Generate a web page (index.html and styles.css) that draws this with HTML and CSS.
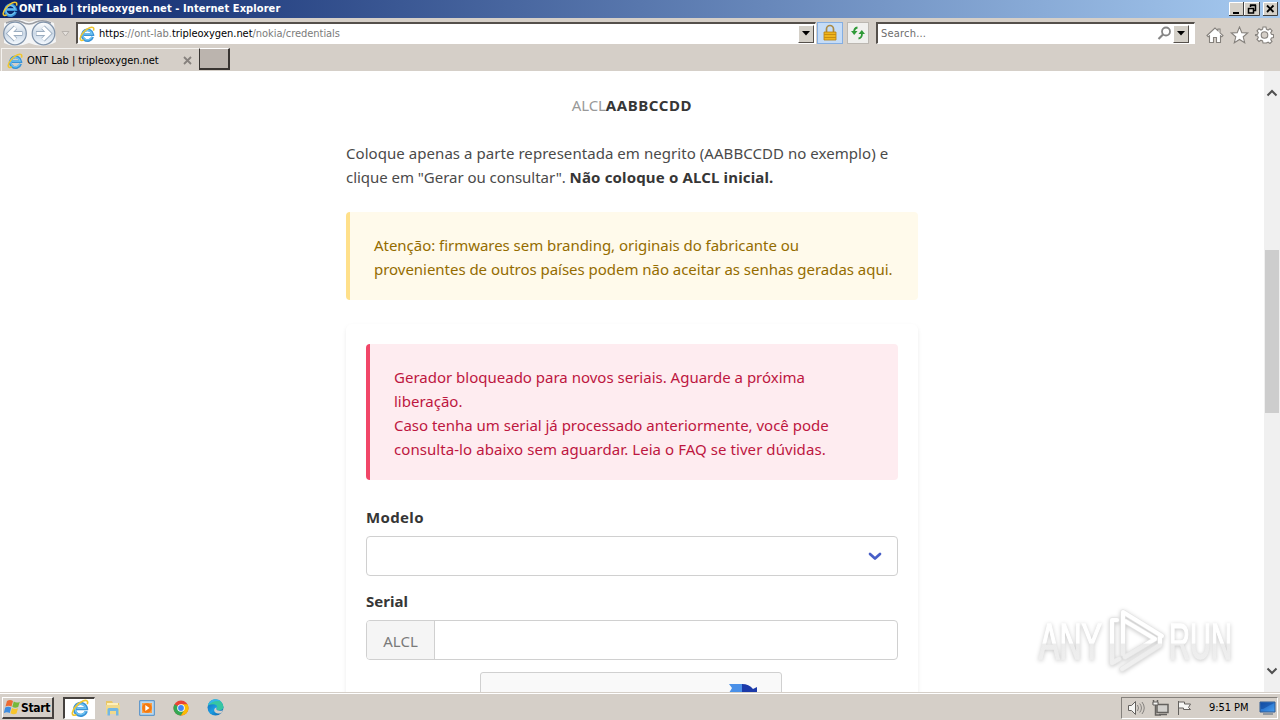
FILE: index.html
```html
<!DOCTYPE html>
<html lang="pt-BR">
<head>
<meta charset="utf-8">
<title>ONT Lab | tripleoxygen.net</title>
<link rel="stylesheet" href="styles.css">
</head>
<body>
<svg class="defs" width="0" height="0">
  <defs>
    <linearGradient id="ring" x1="0" y1="0" x2="0" y2="1"><stop offset="0" stop-color="#fff"/><stop offset=".5" stop-color="#cbd8e6"/><stop offset="1" stop-color="#f5faff"/></linearGradient>
    <linearGradient id="screen" x1="0" y1="0" x2="1" y2="1"><stop offset="0" stop-color="#1458b8"/><stop offset="1" stop-color="#4aa0f0"/></linearGradient>
    <linearGradient id="edge" x1="0" y1="0" x2="1" y2="1"><stop offset="0" stop-color="#1663b5"/><stop offset=".5" stop-color="#1b9de2"/><stop offset="1" stop-color="#0c59a4"/></linearGradient>
    <linearGradient id="fade" gradientUnits="userSpaceOnUse" x1="0" y1="0" x2="0" y2="72"><stop offset=".54" stop-color="#fff"/><stop offset=".56" stop-color="#ececec"/><stop offset="1" stop-color="#f1f1f1"/></linearGradient>
    <symbol id="ie" viewBox="0 0 16 16">
      <path d="M13.600 10.800A5.300 5.300 0 1 1 13.800 8.700H4.600" fill="none" stroke="#3a93d6" stroke-width="2.800"/>
      <path d="M12.900 10.800A4.700 4.700 0 1 1 13.100 8.200H5" fill="none" stroke="#6fc4f2" stroke-width="1.300"/>
      <path d="M14.400 4.600C15.600 1.800 13.800.4 10.600 1.800 6 3.800 1.600 9 1.200 12.300c-.2 2.200 1.400 2.600 3.600 1.600" fill="none" stroke="#efc62f" stroke-width="1.500"/>
    </symbol>
  </defs>
</svg>
<div class="desktop">
  <header class="titlebar">
    <svg class="i16" viewBox="0 0 16 16"><use href="#ie"/></svg>
    <span class="title">ONT Lab | tripleoxygen.net - Internet Explorer</span>
    <div class="winbtns">
      <svg width="49" height="14" viewBox="0 0 49 14">
        <g fill="#d4d0c8"><path d="M0 0h15v14H0zM15 0h16v14H15zM34 0h15v14H34z"/></g>
        <path d="M.5 13V.5H14M15.500 13V.5H30M34.500 13V.5H48" fill="none" stroke="#fff"/>
        <path d="M0 13.500h14.500V0M15 13.500h15.500V0M34 13.500h14.500V0" fill="none" stroke="#404040"/>
        <path d="M4 10h6v2H4z"/>
        <path d="M21.500 5V3.500h5v5H25M21 3h6M19.500 6.500h5v4.500h-5zM19 6.500h6" fill="none" stroke="#000" stroke-width="1.500"/>
        <path d="M38 3.500l6.500 6.500M44.500 3.500L38 10" stroke="#000" stroke-width="1.800"/>
      </svg>
    </div>
  </header>
  <nav class="navbar">
    <svg class="arrows" width="72" height="30" viewBox="0 0 72 30">
      <path d="M4 5Q15-1 29 4 43-1 54 5L56 24Q43 31 29 25 15 31 4 25z" fill="#f4f5f6"/>
      <path d="M6 5Q15 1 22 4 29 8 36 4 43 1 51 5" fill="none" stroke="#9a9da3" stroke-width="1.500"/>
      <g fill="url(#ring)" stroke="#8194ab" stroke-width="1.200"><circle cx="15" cy="15.500" r="11.300"/><circle cx="43.500" cy="15.500" r="11.300"/></g>
      <g fill="none" stroke="#9aacbf" stroke-width="4.800"><path d="M9.500 15.500h13M15.500 9.300l-6.200 6.200 6.200 6.200"/><path d="M49 15.500H36M43 9.300l6.200 6.200-6.200 6.200"/></g>
      <g fill="none" stroke="#fff" stroke-width="3.200"><path d="M9.500 15.500H22M15.500 9.300l-6.200 6.200 6.200 6.200"/><path d="M49 15.500H36.500M43 9.300l6.200 6.200-6.200 6.200"/></g>
      <path d="M62 13.500h7L65.500 18z" fill="#e4e0dc" stroke="#b7b2ad"/>
    </svg>
    <div class="field address">
      <svg class="i16" viewBox="0 0 16 16"><use href="#ie"/></svg>
      <span class="url"><b>https</b>://ont-lab.<b>tripleoxygen.net</b>/nokia/credentials</span>
      <span class="drop"><svg width="8" height="5"><path d="M0 0h8L4 4.500z"/></svg></span>
    </div>
    <span class="tool lock"><svg width="16" height="18" viewBox="0 0 16 18"><path d="M4.500 9V5a3.500 3.500 0 0 1 7 0v4" fill="none" stroke="#aa8a45" stroke-width="1.700"/><path d="M2 8h12v8H2z" fill="#efb51e" stroke="#b77d0c" stroke-width=".8"/><path d="M2 10.500h12M2 13.500h12" stroke="#c98e10"/></svg></span>
    <span class="tool refresh"><svg width="16" height="16" viewBox="0 0 16 16" fill="none" stroke="#2f9a38" stroke-width="1.800"><path d="M7.500 2.500Q4 3 4 7.500"/><path d="M1 6h6.500L4.200 10z" fill="#2f9a38" stroke="none"/><path d="M8.500 13.500Q12 13 12 8.500"/><path d="M8.500 9H15L11.800 5z" fill="#2f9a38" stroke="none"/></svg></span>
    <div class="field search">
      <span class="hint">Search...</span>
      <svg width="15" height="15" viewBox="0 0 15 15"><circle cx="9" cy="5.500" r="4" fill="none" stroke="#858585" stroke-width="1.800"/><path d="M6 8.500L1.500 13" stroke="#858585" stroke-width="2.200"/></svg>
      <span class="drop"><svg width="8" height="5"><path d="M0 0h8L4 4.500z"/></svg></span>
    </div>
    <svg class="cmds" width="68" height="18" viewBox="0 0 68 18" fill="#fff" stroke="#85817c" stroke-width="1.100">
      <path d="M1 9.500L9 2l3 2.800V3h2v3.800l3 2.700-1.200 1.300-1.300-1v6.700h-4v-5h-3v5h-4V9.800l-1.300 1z"/>
      <path d="M33.500 1l2.300 5.600 5.900.4-4.500 3.800 1.500 5.900-5.200-3.200-5.200 3.200 1.500-5.900L25.300 7l5.900-.4z"/>
      <path d="M57 1h3l.4 2.200 1.700.8 2-1.300 2 2.100-1.400 1.800.7 1.700 2.100.4v2.800l-2.100.4-.7 1.700 1.300 1.900-2 2-1.900-1.300-1.700.7L60 17h-3l-.4-2.100-1.700-.7-1.900 1.300-2-2 1.300-1.900-.7-1.700-2.100-.4V8.700l2.100-.4.7-1.700L51 4.800l2-2.100 2 1.300 1.600-.8z"/>
      <circle cx="58.500" cy="9" r="3.300" fill="#d5cfc8"/>
    </svg>
  </nav>
  <div class="tabs">
    <div class="tab">
      <svg class="i16" viewBox="0 0 16 16"><use href="#ie"/></svg>
      <span class="tabname">ONT Lab | tripleoxygen.net</span>
      <svg width="9" height="9" viewBox="0 0 9 9"><path d="M1 1l7 7M8 1L1 8" stroke="#86817d" stroke-width="1.800"/></svg>
    </div>
    <div class="newtab"></div>
  </div>
  <div class="viewport">
    <main class="page">
      <p class="example"><span>ALCL</span><strong>AABBCCDD</strong></p>
      <p class="intro"><span class="line l1">Coloque apenas a parte representada em negrito (AABBCCDD no exemplo) e</span><span class="line l2">clique em "Gerar ou consultar". <strong>Não coloque o ALCL inicial.</strong></span></p>
      <div class="msg warning"><span class="line l3">Atenção: firmwares sem branding, originais do fabricante ou</span><span class="line l4">provenientes de outros países podem não aceitar as senhas geradas aqui.</span></div>
      <section class="box">
        <div class="msg danger"><span class="line">Gerador bloqueado para novos seriais. Aguarde a próxima</span><span class="line">liberação.</span><span class="line l7">Caso tenha um serial já processado anteriormente, você pode</span><span class="line l8">consulta-lo abaixo sem aguardar. Leia o FAQ se tiver dúvidas.</span></div>
        <label class="label modelo">Modelo</label>
        <div class="control select"><svg width="14" height="9" viewBox="0 0 14 9"><path d="M2 2l5 4.600L12 2" fill="none" stroke="#485fc7" stroke-width="2.700" stroke-linecap="round" stroke-linejoin="round"/></svg></div>
        <label class="label serial">Serial</label>
        <div class="control serialbox"><span class="addon">ALCL</span></div>
        <div class="captcha"><svg width="30" height="30" viewBox="0 0 30 30"><path d="M1 0h14v14H7L1 9l3-5z" fill="#4a90e8"/><path d="M14 0q7 0 11 5l4-2v12H14z" fill="#1c3aa9"/></svg></div>
      </section>
    </main>
    <div class="scroll">
      <svg width="12" height="8" viewBox="0 0 12 8"><path d="M1.500 6.500L6 2l4.500 4.500" fill="none" stroke="#505050" stroke-width="2"/></svg>
      <div class="thumb"></div>
      <svg width="12" height="8" viewBox="0 0 12 8"><path d="M1.500 1.500L6 6l4.500-4.500" fill="none" stroke="#505050" stroke-width="2"/></svg>
    </div>
    <svg class="watermark" width="220" height="76" viewBox="0 0 220 76">
      <g fill="url(#fade)" stroke="url(#fade)" stroke-width="1.400">
        <text x="9" y="55" textLength="63" lengthAdjust="spacingAndGlyphs">ANY</text>
        <text x="139" y="55" textLength="63" lengthAdjust="spacingAndGlyphs">RUN</text>
      </g>
      <g fill="none" stroke-linejoin="round" stroke-linecap="round">
        <path d="M93 50V8l39 24M95 17l30 18-30 18M87 16h-5v43l7-4M92 65l38-24V33" stroke="#e6e6e6" stroke-width="5.400"/>
        <path d="M93 50V8l39 24M95 17l30 18-30 18M87 16h-5v43l7-4M92 65l38-24V33" stroke="url(#fade)" stroke-width="4"/>
      </g>
    </svg>
  </div>
  <footer class="taskbar">
    <div class="start">
      <svg width="17" height="16" viewBox="0 0 17 16"><path d="M3 2q3-2 6 0L7.500 7.500q-3-1.500-6 0z" fill="#ed6b32"/><path d="M9.800 2.500q3 2 6 .2L14.200 8q-3 1.600-5.900-.2z" fill="#76b83a"/><path d="M1.200 8.500q3-1.500 6 0L5.800 14q-3-1.700-6 0z" fill="#3f8de0"/><path d="M8 9q3 1.700 6 .2L12.500 14.500q-3 1.700-6-.2z" fill="#f7c52c"/></svg>
      <span>Start</span>
    </div>
    <div class="task"><svg width="18" height="18" viewBox="0 0 16 16"><use href="#ie"/></svg></div>
    <div class="quick">
      <svg width="16" height="16" viewBox="0 0 16 16"><path d="M1 1h6l1 2h6v10H1z" fill="#e8c666"/><path d="M2 3h11v3H2z" fill="#fff0b8"/><path d="M1 5h14v9H1z" fill="#f0d98c"/><path d="M2.500 15.500V9.500q0-1.500 1.500-1.500h8q1.500 0 1.500 1.500v6H11V11H5v4.500z" fill="#72b7e4"/></svg>
      <svg width="16" height="16" viewBox="0 0 16 16"><path d="M.7.700h14.600v14.600H.7z" fill="#b9d8ef" stroke="#4c8cc8"/><path d="M3 3h10v10H3z" fill="#f9a04a"/><circle cx="8" cy="8" r="4.800" fill="#f47a10"/><path d="M6.300 5v6l4.200-3z" fill="#fff"/></svg>
      <svg width="16" height="16" viewBox="0 0 16 16"><circle cx="8" cy="8" r="7.500" fill="#ea4335"/><path d="M1.500 4.250A7.500 7.500 0 0 0 8 15.500l3.250-5.600L8 8z" fill="#34a853"/><path d="M8 15.500A7.500 7.500 0 0 0 14.500 4.250H8V8l3.250 1.900z" fill="#fbbc04"/><circle cx="8" cy="8" r="3.800" fill="#fff"/><circle cx="8" cy="8" r="2.900" fill="#4285f4"/></svg>
      <svg width="17" height="17" viewBox="0 0 17 17"><circle cx="8.500" cy="8.500" r="8" fill="url(#edge)"/><path d="M1 6.500C2.500-1 14-2 16.300 7c.7 3-2 4.500-5 4.200-2-.3-2-1-1.300-2C11 5 6 4.500 1 6.500z" fill="#37c6a2"/><path d="M1 6.500C2.500-1 11-1 14 2.500 9 1 4 3 1 6.500z" fill="#35b5e9"/><path d="M9.800 8.500c-1.500 2 .5 4.200 6.400 2.700-.6 1.600-1.600 2.500-2.600 3.200-3.600.8-6.800-1.400-6.400-3.400.2-1.500 1-2.500 2.600-2.500z" fill="#d5cfc8"/></svg>
    </div>
    <div class="tray">
      <svg width="67" height="18" viewBox="0 0 67 18" fill="#f6f6f4" stroke="#64615e" stroke-width="1">
        <path d="M1.500 6.500h3l4-4v13l-4-4h-3z"/><path d="M10.500 6q2 3 0 6M12.700 4.500q3.500 4.500 0 9M15 3q4.500 6 0 12" fill="none" stroke="#85827f"/>
        <path d="M30 5.500h11v8H30z" fill="#d2d0cd" stroke-width="1.500"/><path d="M32 15.500h8M26.500 1v4h4V1M28.500 6v10H34" fill="none" stroke-width="1.500"/><path d="M26 3h5v3h-5z"/>
        <path d="M51.500 2v14M51.500 3h6v2h6l-2 3.500 2 2h-7V9h-5z"/>
      </svg>
      <span>9:51 PM</span>
      <svg width="17" height="15" viewBox="0 0 17 15"><path d="M1 2h15v10H1z" fill="url(#screen)" stroke="#305b91"/><path d="M2 3h13L4 9H2z" fill="#0b3f91" opacity=".5"/><path d="M4 14h10" stroke="#4c6077"/></svg>
    </div>
  </footer>
</div>
</body>
</html>
```

FILE: styles.css
```css
* { box-sizing: border-box; }
body { margin: 0; overflow: hidden; }
svg { display: block; flex: none; }
.defs { position: absolute; }
.desktop { width: 1280px; height: 720px; display: flex; flex-direction: column; background: #d5cfc8; font: 11px/14px "DejaVu Sans Condensed", "DejaVu Sans", sans-serif; font-stretch: condensed; color: #000; overflow: hidden; }
.i16 { width: 16px; height: 16px; }

.titlebar { flex: none; height: 18px; display: flex; align-items: center; padding: 0 2px 0 2px; background: linear-gradient(90deg, #0a246a, #a6caf0); }
.title { margin-left: 1px; color: #fff; font-weight: bold; white-space: nowrap; letter-spacing: 0.09px; }
.winbtns { margin-left: auto; }

.navbar { flex: none; height: 30px; display: flex; align-items: center; padding-right: 6px; }
.arrows { margin-right: 4px; }
.field { height: 22px; display: flex; align-items: center; background: #fff; border: 1px solid #fff; border-top: 2px solid #55504b; border-left: 2px solid #55504b; }
.address { width: 740px; padding: 0 1px; }
.url { margin: 1px 0 0 4px; color: #7b7b7b; white-space: nowrap; letter-spacing: -0.04px; }
.url b { font-weight: normal; color: #000; }
.drop { width: 16px; height: 18px; display: flex; align-items: center; justify-content: center; background: #d4d0c8; border: 1px solid #fff; border-right-color: #55504b; border-bottom-color: #55504b; }
.address .drop { margin-left: auto; }
.tool { width: 26px; height: 22px; display: flex; align-items: center; justify-content: center; }
.lock { margin-left: 1px; background: #c5dcf7; border: 1px solid #84aee2; }
.refresh { width: 22px; margin-left: 4px; background: #f0f0ee; border: 1px solid #bcb8b2; }
.search { width: 319px; margin-left: 7px; padding-right: 5px; }
.hint { margin: 1px auto 0 3px; color: #6d6d6d; letter-spacing: 0.2px; }
.search .drop { margin-left: 1px; }
.cmds { margin: 4px 0 0 auto; }

.tabs { flex: none; height: 23px; display: flex; }
.tab { width: 198px; display: flex; align-items: center; padding: 1px 7px 0 5px; border-left: 1px solid #f4f2ef; border-top: 1px solid #f4f2ef; margin-left: 1px; }
.tabname { margin: 0 auto 0 4px; white-space: nowrap; letter-spacing: -0.06px; }
.newtab { width: 31px; height: 22px; background: #bbb4ae; border: 1px solid #fff; border-right: 2px solid #383431; border-bottom: 2px solid #383431; border-left: 1px solid #383431; }

.viewport { flex: none; position: relative; height: 621px; display: flex; background: #fff; overflow: hidden; }
.page { width: 572px; margin-left: 346px; font: 15px/24px "Noto Sans", "Open Sans", sans-serif; color: #4a4a4a; }
.page strong, .label { color: #363636; font-weight: 700; }
.example { margin: 22px 0 24px; text-align: center; }
.example span { color: #999; letter-spacing: -0.15px; }
.example strong { letter-spacing: 0.6px; }
.intro { margin: 0 0 23px; }
.line { display: block; white-space: nowrap; }
.l1 { letter-spacing: 0.055px; }
.l2 { letter-spacing: -0.04px; }
.l2 strong { letter-spacing: 0.15px; }
.l3 { letter-spacing: -0.035px; }
.l4 { letter-spacing: -0.03px; }
.l7 { letter-spacing: -0.017px; }
.l8 { letter-spacing: 0.065px; }
.msg { border-radius: 4px; padding: 21px 24px 19px; border-left: 4px solid; }
.warning { height: 88px; background: #fffaeb; border-color: #ffe08a; color: #946c00; }
.danger { height: 136px; background: #feecf0; border-color: #f14668; color: #bd1640; }
.box { height: 420px; margin-top: 24px; padding: 20px; border-radius: 6px; box-shadow: 0 2px 4px #00000014; }
.label { display: block; width: max-content; }
.modelo { margin: 25px 0 7px; letter-spacing: 0.35px; }
.serial { margin: 13px 0 7px; }
.control { height: 40px; display: flex; align-items: center; border: 1px solid #d0d0d0; border-radius: 4px; }
.select { justify-content: flex-end; padding-right: 15px; }
.addon { width: 68px; height: 38px; display: flex; align-items: center; justify-content: center; padding-top: 2px; background: #f5f5f5; border-right: 1px solid #d0d0d0; border-radius: 3px 0 0 3px; color: #7a7a7a; }
.captcha { width: 302px; height: 76px; margin: 12px 0 0 114px; padding: 11px 23px 0 0; display: flex; justify-content: flex-end; background: #f9f9f9; border: 1px solid #d0d0d0; border-radius: 3px; }
.scroll { width: 16px; margin-left: auto; display: flex; flex-direction: column; align-items: center; padding: 18px 0 17px; background: #f0f0f0; }
.scroll > svg:last-child { margin-top: auto; }
.thumb { width: 14px; height: 163px; margin-top: 153px; background: #cdcdcd; }
.watermark { position: absolute; left: 1030px; top: 533px; overflow: visible; filter: drop-shadow(0 1px 2px #00000038); font: 50px "Liberation Sans Narrow", "Liberation Sans", sans-serif; }

.taskbar { flex: none; height: 28px; display: flex; align-items: center; padding: 3px 2px 1px; border-top: 1px solid #d5cfc8; box-shadow: inset 0 1px #fff; }
.start { width: 52px; height: 22px; display: flex; align-items: center; padding-left: 1px; font-weight: bold; border: 1px solid #fff; border-right: 2px solid #45413e; border-bottom: 2px solid #45413e; }
.start span { margin: 1px 0 0; font-size: 12px; letter-spacing: -0.35px; }
.task { width: 32px; height: 22px; margin-left: 9px; display: flex; align-items: center; justify-content: center; background: #fff; border: 2px solid #45413e; border-right: 1px solid #fff; border-bottom: 1px solid #fff; }
.quick { display: flex; align-items: center; gap: 18px; margin-left: 10px; }
.tray { width: 157px; height: 22px; margin-left: auto; display: flex; align-items: center; padding: 0 1px 0 5px; border: 1px solid #fff; border-top-color: #85817c; border-left-color: #85817c; }
.tray span { margin: 0 auto 0 15px; white-space: nowrap; letter-spacing: -0.05px; }
```
